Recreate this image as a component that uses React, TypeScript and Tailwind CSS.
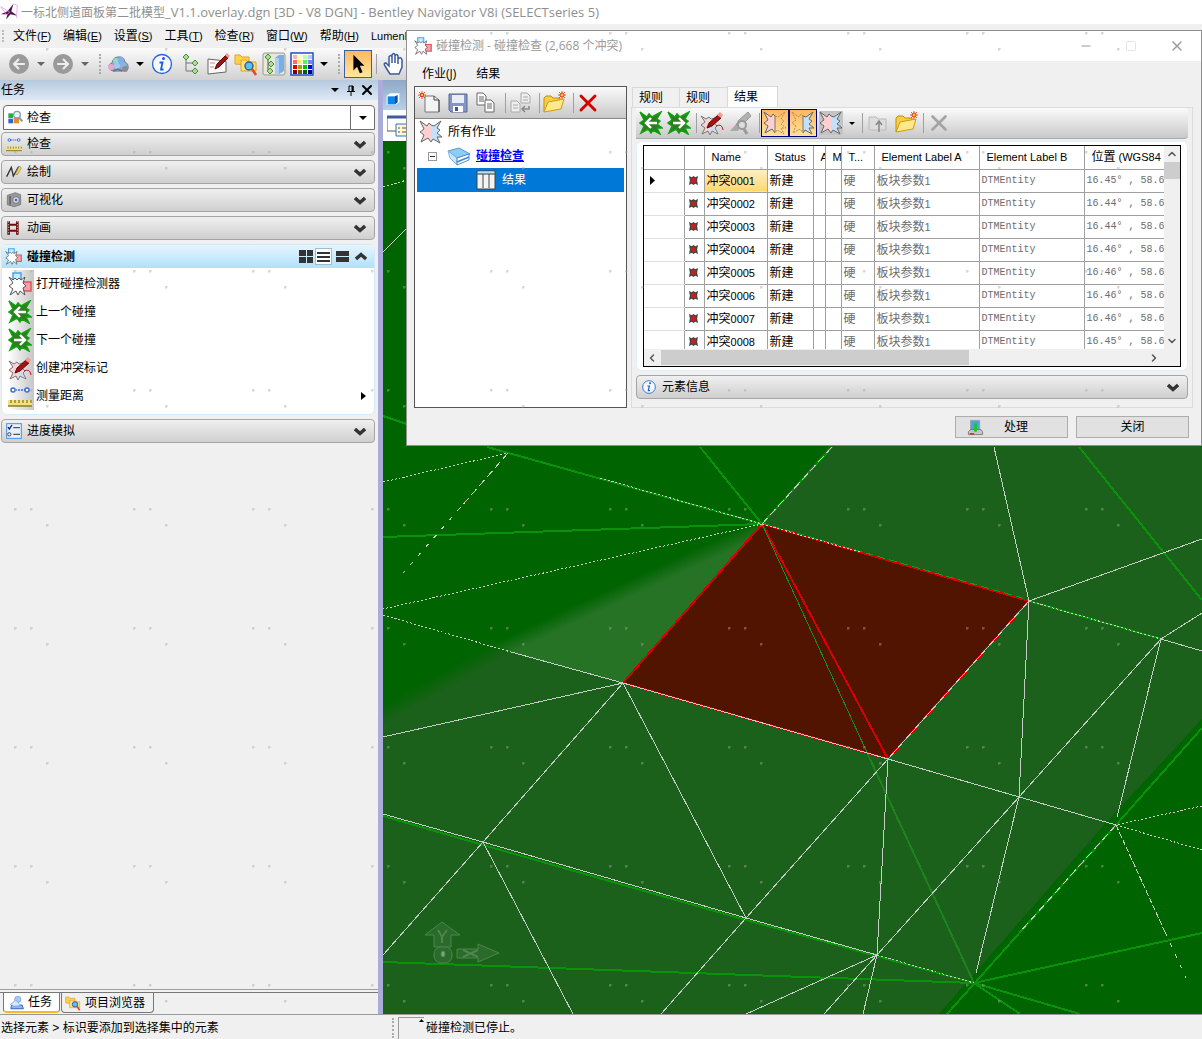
import type { ReactNode } from "react"
import { ChevronLeft, ChevronRight, ChevronDown, ChevronUp, Minus, Square, X } from "lucide-react"

const BURST = "M1 1L8 6L10 3L13 6L22 1L18 8L21 10L18 13L23 17L18 17L21 23L14 19L12 22L9 18L2 22L5 15L1 12L5 9Z"

const rows = ["16.45", "16.44", "16.44", "16.46", "16.46", "16.46", "16.46", "16.45"].map((lat, i) => ({
  id: `000${i + 1}`,
  position: `${lat}° , 58.6`,
}))

const menus = [
  ["文件", "F"],
  ["编辑", "E"],
  ["设置", "S"],
  ["工具", "T"],
  ["检查", "R"],
  ["窗口", "W"],
  ["帮助", "H"],
]

/* ---------- Icons ---------- */

function Svg({ size = 24, children }: { size?: number; children: ReactNode }) {
  return (
    <svg width={size} height={size} viewBox="0 0 24 24" fill="none" className="shrink-0" aria-hidden="true">
      {children}
    </svg>
  )
}

function Caret({ className = "text-black" }: { className?: string }) {
  return (
    <svg width="8" height="4" viewBox="0 0 8 4" className={`shrink-0 ${className}`} aria-hidden="true">
      <path d="M0 0H8L4 4Z" fill="currentColor" />
    </svg>
  )
}

function Chevron({ up = false }: { up?: boolean }) {
  return (
    <svg width="12" height="9" viewBox="0 0 12 9" className="shrink-0" aria-hidden="true">
      <path d={up ? "M1 7L6 2.500L11 7" : "M1 2L6 6.500L11 2"} fill="none" stroke="#333" strokeWidth="3.400" />
    </svg>
  )
}

function GreenBurst({ right = false }: { right?: boolean }) {
  return (
    <Svg>
      <path d={BURST} fill="#2f7d22" stroke="#12a012" strokeWidth="1.500" />
      <path
        d={right ? "M6 12H17M12 7L17 12L12 17" : "M18 12H7M12 7L7 12L12 17"}
        stroke="#fff"
        strokeWidth="2.400"
      />
    </Svg>
  )
}

function ClashIcon({ size = 24 }: { size?: number }) {
  return (
    <Svg size={size}>
      <path d="M5 9V1H13V9" fill="#c8eaff" stroke="#4ba3e8" strokeWidth="1.500" />
      <path d="M14 10H23V19H14Z" fill="#f5a0a8" stroke="#e0525c" strokeWidth="1.500" />
      <path
        d="M1 5L5 8L7 6L9 8L11 6L13 8L17 5L15 11L18 14L15 16L17 23L12 19L10 23L8 19L2 23L5 17L1 14L5 11Z"
        fill="#fff"
        stroke="#555"
      />
    </Svg>
  )
}

function MarkIcon({ gray = false }: { gray?: boolean }) {
  return (
    <Svg>
      {gray ? (
        <>
          <path d="M2 20L9 12L13 15L10 20Z" fill="#aaa" />
          <path d="M8 14L11 9L20 1L23 5L14 14Z" fill="#b0b0b0" stroke="#999" />
          <circle cx="14" cy="14" r="4" fill="#ddd" stroke="#999" strokeWidth="2" />
          <path d="M16 18L19 23" stroke="#999" strokeWidth="3" />
        </>
      ) : (
        <>
          <path
            d="M1 5L6 8L9 6L11 8L15 7L14 12L17 15L15 17L18 23L12 20L10 24L8 20L2 23L5 17L1 14L5 11Z"
            fill="#f8d3d6"
            stroke="#777"
          />
          <path d="M12 14L15 15L14 17L17 22L12 19L10 22Z" fill="#bfe0fb" />
          <path d="M16 15Q22 12 23 19" stroke="#c01818" />
          <path d="M7 17L9 12L18 4L21 7L12 15Z" fill="#a51212" stroke="#5a0a0a" />
          <path d="M17 4L20 1L23 4L21 7Z" fill="#f59a90" />
        </>
      )}
    </Svg>
  )
}

function BurstPair({ left = true, right = true }: { left?: boolean; right?: boolean }) {
  return (
    <Svg>
      <path d="M12 5L10 3L8 6L1 1L5 9L1 12L5 15L2 22L9 18L12 22Z" fill={left ? "#fad0d3" : "none"} />
      <path d="M12 5L15 6L22 1L18 8L21 10L18 13L23 17L18 17L21 23L14 19L12 22Z" fill={right ? "#c4e0fa" : "none"} />
      <path
        d="M12 5L10 3L8 6L1 1L5 9L1 12L5 15L2 22L9 18L12 22"
        stroke={left ? "#666" : "#b98d52"}
        strokeDasharray={left ? undefined : "2 1"}
      />
      <path
        d="M12 5L15 6L22 1L18 8L21 10L18 13L23 17L18 17L21 23L14 19L12 22"
        stroke={right ? "#666" : "#b98d52"}
        strokeDasharray={right ? undefined : "2 1"}
      />
      {left !== right && <path d="M12 5V21" stroke="#777" />}
    </Svg>
  )
}

function RulerIcon({ size = 24 }: { size?: number }) {
  return (
    <Svg size={size}>
      <path d="M7 6H17" stroke="#2f6fe0" strokeWidth="1.500" strokeDasharray="2 1" />
      <circle cx="5" cy="6" r="2" fill="#fff" stroke="#2f6fe0" strokeWidth="1.500" />
      <circle cx="19" cy="6" r="2" fill="#fff" stroke="#2f6fe0" strokeWidth="1.500" />
      <path d="M0 16H24V22H0Z" fill="#f2e27a" />
      <path d="M0 22H24" stroke="#8b7a30" strokeWidth="1.500" />
      <path d="M3 16V19M7 16V19M11 16V19M15 16V19M19 16V19M23 16V19" stroke="#6b5a18" />
    </Svg>
  )
}

function InfoIcon({ size = 24 }: { size?: number }) {
  return (
    <Svg size={size}>
      <circle cx="12" cy="12" r="9.500" fill="#f4f9ff" stroke="#2563d8" strokeWidth="1.300" />
      <circle cx="13.500" cy="6.500" r="1.500" fill="#1b5be0" />
      <path d="M9.500 10.500H12.500L11 17.500H13.500" stroke="#1b5be0" strokeWidth="1.800" />
    </Svg>
  )
}

function FolderNew() {
  return (
    <Svg>
      <path d="M2 21V7L4 5H9L11 7H18V10" fill="#f7cf45" stroke="#c98b0a" />
      <path d="M2 21L6 11L22 8L19 18Z" fill="#ffe98a" stroke="#d09a12" />
      <path d="M20 0V8M16 4H24M17 1L23 7M23 1L17 7" stroke="#e8321a" strokeWidth="0.800" />
      <circle cx="20" cy="4" r="2" fill="#ffd21f" stroke="#e8321a" />
    </Svg>
  )
}

function FolderSearch({ size = 24 }: { size?: number }) {
  return (
    <Svg size={size}>
      <path d="M1 12V3H6L8 5H15V13Z" fill="#ffd24a" stroke="#e0a02e" />
      <path d="M7 19V8H12L14 10H22V19Z" fill="#ffe27a" stroke="#e0a02e" />
      <circle cx="15" cy="14" r="4" fill="#5cc0f0" stroke="#2a60a8" strokeWidth="1.500" />
      <path d="M18 17L22 23" stroke="#e8461e" strokeWidth="2.500" />
    </Svg>
  )
}

function PageNew() {
  return (
    <Svg>
      <path d="M7 5H16L21 9V21H7Z" fill="#f4f4f4" stroke="#777" />
      <path d="M16 5V9H21V21" stroke="#444" />
      <path d="M4 0V8M0 4H8M1 1L7 7M7 1L1 7" stroke="#e8321a" strokeWidth="0.800" />
      <circle cx="4" cy="4" r="1.700" fill="#ffd21f" stroke="#e8321a" />
    </Svg>
  )
}

function SaveIcon() {
  return (
    <Svg>
      <path d="M3 3H21V21H5L3 19Z" fill="#8494c4" stroke="#5a6698" />
      <path d="M6 4H18V12H6Z" fill="#e9edf5" />
      <path d="M7 15H17V21H7Z" fill="#fff" />
      <path d="M9 16H12V20H9Z" fill="#4a5680" />
    </Svg>
  )
}

function CopyIcon({ gray = false }: { gray?: boolean }) {
  const stroke = gray ? "#aaa" : "#666"
  return (
    <Svg>
      {gray ? (
        <>
          <path d="M13 2H19L22 5V12H13Z" fill="#eee" stroke={stroke} />
          <path d="M15 6H20M15 9H20" stroke={stroke} />
          <path d="M3 10H9L12 13V21H3Z" fill="#eee" stroke={stroke} />
          <path d="M5 14H10M5 17H10" stroke={stroke} />
          <path d="M21 15V18H14M17 15L14 18L17 21" stroke="#888" strokeWidth="1.500" />
        </>
      ) : (
        <>
          <path d="M3 2H9L12 5V14H3Z" fill="#fff" stroke={stroke} />
          <path d="M5 6H10M5 8H10M5 10H10" stroke={stroke} />
          <path d="M11 9H17L20 12V21H11Z" fill="#fff" stroke={stroke} />
          <path d="M13 13H18M13 15H18M13 17H18" stroke={stroke} />
        </>
      )}
    </Svg>
  )
}

function PenNote() {
  return (
    <Svg>
      <path d="M2 7L20 9V20L2 22Z" fill="#fafafa" stroke="#666" />
      <path d="M4 11H9M4 15H8" stroke="#f08080" />
      <path d="M9 17L11 12L20 3L22 6L13 15Z" fill="#a51212" stroke="#5a0a0a" />
      <path d="M19 3L21 1L24 4L22 6Z" fill="#f59a90" />
    </Svg>
  )
}

function CloudIcon() {
  return (
    <Svg>
      <path d="M3 16Q2 12 6 11Q7 5 12 5Q18 4 19 10Q23 12 22 17Q16 20 12 19Q5 20 3 16Z" fill="#8fa8c4" stroke="#6c8098" />
      <circle cx="10" cy="9" r="3" fill="#8ed8d0" />
      <circle cx="15" cy="8" r="3" fill="#7fb0e8" />
      <circle cx="5" cy="15" r="3" fill="#e8a8cc" />
      <circle cx="11" cy="14" r="3" fill="#a4c8f0" />
      <circle cx="17" cy="13" r="3" fill="#8ab4e4" />
      <circle cx="19" cy="17" r="3" fill="#8a8a92" />
      <path d="M7 19L12 17L16 19" stroke="#66728a" strokeWidth="1.500" />
    </Svg>
  )
}

function TreeIcon() {
  return (
    <Svg>
      <path d="M8 5V19H16M8 11H16" stroke="#777" />
      <path
        d="M8 2L11 5L8 8L5 5ZM17 8L20 11L17 14L14 11ZM17 16L20 19L17 22L14 19Z"
        fill="#a8e090"
        stroke="#4a8a40"
      />
    </Svg>
  )
}

function ModelsIcon() {
  return (
    <Svg>
      <rect x="1" y="1" width="22" height="22" rx="2" fill="#e8e7d8" stroke="#9a9a90" />
      <path d="M13 6L17 3H22V19L17 22H13Z" fill="#79aee8" />
      <path d="M13 6H17V22H13Z" fill="#a9cff6" />
      <path d="M6 5V18H9" stroke="#555" />
      <path d="M6 2L9 5L6 8L3 5ZM9 9L12 12L9 15L6 12ZM8 16L11 19L8 22L5 19Z" fill="#a8e090" stroke="#4a8a40" />
    </Svg>
  )
}

const swatches = [
  ["#ffb3b3", "#ffffb3", "#b3ffb3", "#c3c3ff"],
  ["#ff6b6b", "#fff06b", "#55f255", "#7f7fff"],
  ["#e00000", "#a8a000", "#00c000", "#0000e0"],
  ["#800000", "#606000", "#006000", "#000080"],
]

function PaletteIcon() {
  return (
    <Svg>
      <rect x="1" y="1" width="22" height="22" fill="#fff" stroke="#1b50c8" strokeWidth="1.500" />
      {swatches.map((line, r) =>
        line.map((c, i) => <rect key={c} x={3 + i * 5} y={3 + r * 5} width="4" height="4" fill={c} />)
      )}
    </Svg>
  )
}

function RoundArrow({ right = false }: { right?: boolean }) {
  return (
    <Svg size={20}>
      <circle cx="12" cy="12" r="12" fill="#9a9a9a" />
      <path
        d={right ? "M5 12H18M12 6L18 12L12 18" : "M19 12H6M12 6L6 12L12 18"}
        stroke="#eee"
        strokeWidth="2.500"
      />
    </Svg>
  )
}

function TasksIcon() {
  return (
    <Svg size={15}>
      <path d="M3 22L4 16H21L23 22Z" fill="#8db6f2" stroke="#2c5fc0" strokeWidth="1.500" />
      <circle cx="14" cy="7" r="5" fill="#a8cdf5" stroke="#5f92d8" />
      <path d="M2 15L11 8L19 17L8 18Z" fill="#d8e8fb" stroke="#5f92d8" />
    </Svg>
  )
}

/* ---------- Shared pieces ---------- */

function IconButton({ label, children, className = "" }: { label: string; children: ReactNode; className?: string }) {
  return (
    <button type="button" aria-label={label} className={`flex h-7 w-7 shrink-0 items-center justify-center ${className}`}>
      {children}
    </button>
  )
}

function Divider() {
  return <span className="h-5 w-px shrink-0 bg-[#a0a0a0]" />
}

function Grip() {
  return <span className="h-5 w-0 shrink-0 border-l-2 border-dotted border-[#aaaaaa]" />
}

function GroupBar({ icon, label }: { icon: ReactNode; label: string }) {
  return (
    <button
      type="button"
      className="flex h-6 w-full items-center rounded border border-[#a5a5a5] bg-linear-to-b from-[#f0f0f0] to-[#cfcfcf] pr-2 pl-1 text-left"
    >
      <span className="flex w-[21px] shrink-0">{icon}</span>
      <span className="flex-1">{label}</span>
      <Chevron />
    </button>
  )
}

/* ---------- Task panel ---------- */

const clashTools = [
  { label: "打开碰撞检测器", icon: <ClashIcon /> },
  { label: "上一个碰撞", icon: <GreenBurst /> },
  { label: "下一个碰撞", icon: <GreenBurst right /> },
  { label: "创建冲突标记", icon: <MarkIcon /> },
  { label: "测量距离", icon: <RulerIcon />, more: true },
]

function TaskPanel() {
  return (
    <aside className="flex w-[378px] shrink-0 flex-col bg-[#f0f0f0]">
      <header className="flex h-5 items-center bg-linear-to-b from-[#b7c9de] to-[#dce8f6] pr-[3px] pl-px">
        <h2 className="flex-1">任务</h2>
        <button type="button" aria-label="菜单" className="px-1">
          <Caret />
        </button>
        <button type="button" aria-label="固定" className="px-1">
          <svg width="8" height="11" viewBox="0 0 8 11" fill="none" stroke="#000" aria-hidden="true">
            <path d="M2 6V1H6V6M0 6.500H8M4 7V11" />
            <path d="M5.500 1V6" strokeWidth="2" />
          </svg>
        </button>
        <button type="button" aria-label="关闭任务">
          <X size={16} strokeWidth={3} />
        </button>
      </header>

      <div className="mx-[3px] mt-[5px] mb-0.5 flex h-[25px] rounded-t border border-[#6e6e6e] bg-white">
        <button type="button" className="flex flex-1 items-center gap-1 pl-[3px] text-left">
          <Svg size={16}>
            <path d="M2 5H9V12H2Z" fill="#2aa84a" />
            <path d="M2 13H9V20H2Z" fill="#2a6ad8" />
            <path d="M10 12H18V20H10Z" fill="#f08a1c" />
            <circle cx="15" cy="7" r="5" fill="#e6f4fb" stroke="#8a9aa5" strokeWidth="2" />
            <path d="M18 11L23 17" stroke="#8a9aa5" strokeWidth="3" />
          </Svg>
          检查
        </button>
        <button type="button" aria-label="选择任务" className="flex w-6 items-center justify-center border-l border-[#6e6e6e]">
          <Caret />
        </button>
      </div>

      <div className="flex flex-1 flex-col gap-1 px-px pr-[3px]">
        <GroupBar label="检查" icon={<RulerIcon size={16} />} />
        <GroupBar
          label="绘制"
          icon={
            <Svg size={16}>
              <path d="M1 19L8 5L11 18L19 4" stroke="#333" strokeWidth="2" />
              <path d="M14 15L20 3L23 6L17 16Z" fill="#ffd93b" stroke="#777" />
            </Svg>
          }
        />
        <GroupBar
          label="可视化"
          icon={
            <Svg size={16}>
              <path d="M2 5L14 1L22 4V19L12 22L2 19Z" fill="#9a9a9a" stroke="#666" />
              <path d="M6 6V19" stroke="#555" strokeWidth="2" />
              <circle cx="15" cy="12" r="5" fill="#d8dcea" stroke="#555" />
              <circle cx="15" cy="12" r="2" fill="#3c5cc0" />
            </Svg>
          }
        />
        <GroupBar
          label="动画"
          icon={
            <Svg size={16}>
              <path d="M4 2V22M17 2V22" stroke="#6e0c0c" strokeWidth="4" />
              <path d="M4 7H17M4 16H17" stroke="#6e0c0c" strokeWidth="3" />
              <path d="M4 2V22M17 2V22" stroke="#fff" strokeDasharray="2 2" />
            </Svg>
          }
        />

        <section className="rounded-md border border-[#d3ebf9] bg-white pb-1">
          <div className="flex h-[23px] items-center rounded-t bg-linear-to-b from-[#e6f5fe] to-[#b0e0fa] pr-[7px] pl-[3px]">
            <span className="flex w-[22px] shrink-0">
              <ClashIcon size={17} />
            </span>
            <h3 className="flex-1 font-bold">碰撞检测</h3>
            <button type="button" aria-label="图标视图" className="grid w-[18px] grid-cols-2 gap-px px-0.5">
              <span className="h-[6px] bg-[#333]" />
              <span className="h-[6px] bg-[#333]" />
              <span className="h-[6px] bg-[#333]" />
              <span className="h-[6px] bg-[#333]" />
            </button>
            <button
              type="button"
              aria-label="列表视图"
              className="flex h-[17px] w-[17px] flex-col justify-center gap-0.5 border border-[#9dbccc] bg-white px-px"
            >
              <span className="h-0.5 bg-[#333]" />
              <span className="h-0.5 bg-[#333]" />
              <span className="h-0.5 bg-[#333]" />
            </button>
            <button type="button" aria-label="面板视图" className="flex w-[17px] flex-col gap-px pl-1">
              <span className="h-[5px] bg-[#333]" />
              <span className="h-[5px] bg-[#333]" />
            </button>
            <button type="button" aria-label="折叠" className="pl-[6px]">
              <Chevron up />
            </button>
          </div>
          <ul className="mt-0.5">
            {clashTools.map((tool) => (
              <li key={tool.label}>
                <button type="button" className="flex h-7 w-full items-center pr-2 pl-[6px] text-left">
                  <span className="flex h-full w-[26px] shrink-0 items-center bg-linear-to-r from-white to-[#c6c6c6]">
                    {tool.icon}
                  </span>
                  <span className="flex-1 pl-0.5">{tool.label}</span>
                  {tool.more && (
                    <svg width="5" height="8" viewBox="0 0 5 8" aria-hidden="true">
                      <path d="M0 0L5 4L0 8Z" />
                    </svg>
                  )}
                </button>
              </li>
            ))}
          </ul>
        </section>

        <GroupBar
          label="进度模拟"
          icon={
            <Svg size={16}>
              <rect x="1" y="1" width="22" height="22" fill="#e6f0ff" stroke="#4b8fe8" strokeWidth="1.500" />
              <path d="M3 6L5 9L9 3" stroke="#12128a" strokeWidth="2" />
              <circle cx="5" cy="17" r="2.500" stroke="#444" strokeWidth="1.500" />
              <path d="M11 7H21M11 17H21" stroke="#555" strokeWidth="2" />
            </Svg>
          }
        />
      </div>

      <div className="flex h-[25px] border-t border-[#a0a0a0]">
        <div className="mt-0.5 flex w-full items-start border-t border-[#777] pl-[3px]">
          <button
            type="button"
            className="flex h-5 w-[57px] items-center gap-1 rounded-b border-r border-b-2 border-l border-[#777] border-b-[#f5b82e] bg-white pl-[5px]"
          >
            <TasksIcon />
            任务
          </button>
          <button
            type="button"
            className="ml-px flex h-5 items-center gap-1 rounded-b border border-t-0 border-[#777] pr-2 pl-[3px]"
          >
            <FolderSearch size={16} />
            项目浏览器
          </button>
        </div>
      </div>
    </aside>
  )
}

/* ---------- Terrain view ---------- */

function Terrain() {
  return (
    <svg
      viewBox="383 141 819 873"
      preserveAspectRatio="xMinYMin slice"
      className="min-h-0 w-full flex-1"
      role="img"
      aria-label="三维视图"
    >
      <defs>
        <linearGradient id="shade" gradientUnits="userSpaceOnUse" x1="562" y1="611" x2="569" y2="626">
          <stop offset="0" stopColor="#006400" />
          <stop offset="1" stopColor="#267326" />
        </linearGradient>
        <linearGradient id="shadeLow" gradientUnits="userSpaceOnUse" x1="437" y1="674" x2="446" y2="690">
          <stop offset="0" stopColor="#006400" />
          <stop offset="1" stopColor="#1b611b" />
        </linearGradient>
      </defs>
      <rect x="383" y="141" width="819" height="873" fill="#006400" />
      <path d="M762 524L894 370H1202V719L1104 825L939 1014H383V700L500 648L623 683Z" fill="#1b611b" />
      <path d="M383 609V737L623 683L383 615Z" fill="url(#shadeLow)" />
      <path d="M762 524L383 609V615L511 652L623 683Z" fill="url(#shade)" />
      <path d="M762 524L1029 601L888 759L623 683Z" fill="#501400" />

      <g shapeRendering="crispEdges" fill="none">
        <g stroke="#0a930a" strokeWidth="2">
          <path d="M383 537L762 524L487 447M700 447L762 524L832 447M383 962L974 983L1202 933" />
          <path d="M383 416L407 424M1202 728L1116 825L947 1014M974 983L1020 1014M974 983L1080 1014" />
          <path d="M383 816L483 845L746 920L974 983M1079 447L1202 600" />
        </g>
        <path d="M1029 601L1161 639" stroke="#0a930a" strokeWidth="2" />
        <path d="M870 759L974 983" stroke="#1d841d" strokeWidth="2" />
        <path d="M762 524L1029 601L888 759L623 683ZM762 524L888 759" stroke="#d80000" strokeWidth="2" />
        <path d="M762 524L870 759" stroke="#149014" />
        <path d="M762 523L1029 600" stroke="#149a14" strokeDasharray="8 4" />
        <g stroke="#c4cec4">
          <path d="M511 652L623 683L383 737M623 683L483 842L383 955M623 683L746 918L661 1014M483 842L573 1014" />
          <path d="M383 814L483 842L746 918L877 955L863 1014M746 1014L877 955L824 1014M746 918L888 759L877 955L1019 797" />
          <path d="M623 683L888 759L1116 825M888 759L1029 601L1019 797L1161 639L1117 817M994 447L1029 601L1202 539" />
          <path d="M1202 613L1161 639L1202 651M1019 797L976 973M383 252L407 228" />
        </g>
        <g stroke="#c4cec4" strokeDasharray="2 2">
          <path d="M383 482L508 453M600 478L762 524L383 609M383 615L511 652M762 524L860 552M877 955L974 983" />
          <path d="M1029 601L1161 639M1202 806L1116 825L1202 850M383 187L407 180" />
        </g>
        <g stroke="#c4cec4" strokeDasharray="8 4">
          <path d="M508 453L460 508M762 524L832 447M1116 825L1020 932" />
        </g>
        <path d="M460 508L403 573M1165 932L1186 978" stroke="#c4cec4" strokeDasharray="4 8" />
        <path d="M1116 825L1165 932" stroke="#c4cec4" strokeDasharray="6 2" />
      </g>

      {/* axis triad */}
      <g fill="#2a6a2a" stroke="#4d854d">
        <path d="M442 922L460 935H451V947H434V935H425Z" />
        <path d="M457 949H478V944L499 953L478 962V958H457Z" />
        <rect x="434" y="947" width="18" height="16" rx="7" />
        <path d="M438 930L442 937L447 930M442 937V943M463 950L478 957M478 950L463 957" strokeWidth="2" />
        <ellipse cx="443" cy="954" rx="2" ry="3" fill="#7ba87b" />
      </g>
    </svg>
  )
}

/* ---------- Clash detection dialog ---------- */

function JobTree() {
  return (
    <div className="flex w-[213px] shrink-0 flex-col border border-[#555] bg-white">
      <div className="flex h-8 shrink-0 items-center border-b border-[#888] bg-linear-to-b from-[#fafafa] to-[#c9c9c9] pl-px">
        <IconButton label="新建">
          <PageNew />
        </IconButton>
        <IconButton label="保存">
          <SaveIcon />
        </IconButton>
        <IconButton label="复制">
          <CopyIcon />
        </IconButton>
        <span className="w-[5px]" />
        <Divider />
        <IconButton label="粘贴">
          <CopyIcon gray />
        </IconButton>
        <span className="w-[5px]" />
        <Divider />
        <IconButton label="打开">
          <FolderNew />
        </IconButton>
        <span className="w-[5px]" />
        <Divider />
        <IconButton label="删除">
          <X size={28} color="#d40000" strokeWidth={2.5} />
        </IconButton>
      </div>
      <ul className="px-0.5 pt-px">
        <li className="flex h-6 items-center gap-[5px] pl-0.5">
          <BurstPair />
          所有作业
        </li>
        <li className="flex h-6 items-center pl-[11px]">
          <button type="button" aria-label="折叠碰撞检查" className="flex h-[9px] w-[9px] items-center border border-[#999] px-px">
            <span className="h-px w-full bg-[#334]" />
          </button>
          <span className="mr-[5px] ml-[10px] flex">
            <Svg>
              <path d="M1 7L12 4L23 10L10 14Z" fill="#8ccdf5" stroke="#5b9ac8" />
              <path d="M1 7L10 14V21L3 14Z" fill="#c9e6fa" stroke="#7fb2dc" />
              <path d="M10 14L22 10V16L10 21Z" fill="#fff" stroke="#4f8fd0" />
              <path d="M10 18L22 13" stroke="#3f86d8" strokeWidth="1.500" />
            </Svg>
          </span>
          <a href="#clash" className="font-bold text-[#0000ff] underline">
            碰撞检查
          </a>
        </li>
        <li className="flex h-6 items-center gap-[6px] bg-[#0078d7] pl-[59px] text-white">
          <svg width="20" height="20" viewBox="0 0 20 20" aria-hidden="true">
            <rect x="1" y="1" width="18" height="18" fill="#f4f4f4" stroke="#444" />
            <path d="M2 3H18" stroke="#b8dcf0" strokeWidth="3" />
            <path d="M7 4V18M13 4V18M1 4H19" stroke="#444" />
          </svg>
          结果
        </li>
      </ul>
    </div>
  )
}

function ResultsTable() {
  return (
    <div className="border border-black bg-white">
      <div className="flex h-[203px]">
        <div className="min-w-0 flex-1 overflow-hidden">
          <table className="w-[560px] table-fixed border-collapse text-left">
            <colgroup>
              <col className="w-10" />
              <col className="w-5" />
              <col className="w-[63px]" />
              <col className="w-[46px]" />
              <col className="w-3" />
              <col className="w-4" />
              <col className="w-[33px]" />
              <col className="w-[105px]" />
              <col className="w-[105px]" />
              <col className="w-[120px]" />
            </colgroup>
            <thead>
              <tr className="h-[23px] text-[11px] leading-4 whitespace-nowrap">
                <th className="border-r border-b border-[#a0a0a0]" />
                <th className="border-r border-b border-[#a0a0a0]" />
                <th className="border-r border-b border-[#a0a0a0] pl-[7px] font-normal">Name</th>
                <th className="border-r border-b border-[#a0a0a0] pl-[7px] font-normal">Status</th>
                <th className="overflow-hidden border-r border-b border-[#a0a0a0] pl-[7px] font-normal">A</th>
                <th className="overflow-hidden border-r border-b border-[#a0a0a0] pl-[7px] font-normal">M</th>
                <th className="overflow-hidden border-r border-b border-[#a0a0a0] pl-[7px] font-normal">T...</th>
                <th className="border-r border-b border-[#a0a0a0] pl-[7px] font-normal">Element Label A</th>
                <th className="border-r border-b border-[#a0a0a0] pl-[7px] font-normal">Element Label B</th>
                <th className="border-b border-[#a0a0a0] pl-[7px] font-normal">
                  <span className="text-xs">位置</span> (WGS84 经纬度)
                </th>
              </tr>
            </thead>
            <tbody>
              {rows.map((row, i) => (
                <tr key={row.id} className="h-[23px] leading-4 whitespace-nowrap">
                  <td className="border-r border-b border-[#a0a0a0] border-b-[#e0e0e0] pl-[6px]">
                    {i === 0 && (
                      <svg width="5" height="9" viewBox="0 0 5 9" aria-label="当前行">
                        <path d="M0 0L5 4.500L0 9Z" />
                      </svg>
                    )}
                  </td>
                  <td className="border-r border-b border-[#a0a0a0] pl-1">
                    <svg width="9" height="9" viewBox="0 0 10 10" aria-hidden="true">
                      <path d="M0 0L3 1.500L5 0L7 1.500L10 0L9 5L10 10L7 8.500L5 10L3 8.500L0 10L1 5Z" fill="#444" />
                      <circle cx="5" cy="5" r="3" fill="#c52020" />
                    </svg>
                  </td>
                  <td
                    className={
                      i === 0
                        ? "border-r border-b border-[#a0a0a0] bg-linear-to-b from-[#fdf0c0] via-[#ffe39a] to-[#ffd76a] pl-0.5"
                        : "border-r border-b border-[#a0a0a0] pl-0.5"
                    }
                  >
                    冲突<span className="text-[11px]">{row.id}</span>
                  </td>
                  <td className="border-r border-b border-[#a0a0a0] pl-0.5">新建</td>
                  <td className="border-r border-b border-[#a0a0a0]" />
                  <td className="border-r border-b border-[#a0a0a0]" />
                  <td className="border-r border-b border-[#a0a0a0] pl-0.5 text-[#6d6d6d]">硬</td>
                  <td className="border-r border-b border-[#a0a0a0] pl-0.5 text-[#6d6d6d]">
                    板块参数<span className="text-[11px]">1</span>
                  </td>
                  <td className="border-r border-b border-[#a0a0a0] pl-0.5 font-[Liberation_Mono,monospace] text-[10px] text-[#6d6d6d]">
                    DTMEntity
                  </td>
                  <td className="border-b border-[#a0a0a0] pl-0.5 font-[Liberation_Mono,monospace] text-[10px] text-[#6d6d6d]">
                    {row.position}
                  </td>
                </tr>
              ))}
            </tbody>
          </table>
        </div>
        <div className="flex w-4 shrink-0 flex-col items-center bg-[#f0f0f0]">
          <ChevronUp size={12} className="my-0.5" color="#555" strokeWidth={3} />
          <span className="h-[17px] w-full bg-[#cdcdcd]" />
          <ChevronDown size={12} className="mt-auto mb-0.5" color="#555" strokeWidth={3} />
        </div>
      </div>
      <div className="flex h-[17px] items-center bg-[#f0f0f0] pr-5 pl-0.5">
        <ChevronLeft size={12} color="#555" strokeWidth={3} />
        <span className="ml-[3px] h-[15px] w-3/5 bg-[#cdcdcd]" />
        <ChevronRight size={12} className="ml-auto" color="#555" strokeWidth={3} />
      </div>
    </div>
  )
}

function ResultsPane() {
  return (
    <div className="flex min-w-0 flex-1 flex-col">
      <div className="flex items-end pl-px">
        <button type="button" className="h-5 w-12 border border-b-0 border-[#d9d9d9] pl-1.5 text-left">
          规则
        </button>
        <button type="button" className="h-5 w-[47px] border-t border-[#d9d9d9] pl-1.5 text-left">
          规则
        </button>
        <button type="button" className="h-[21px] w-[51px] border-x border-t border-[#d9d9d9] bg-white pl-1.5 text-left">
          结果
        </button>
      </div>
      <div className="border border-[#dcdcdc] bg-[#f0f0f0] px-1 pb-2">
        <div className="flex h-[31px] items-center rounded-r border-b border-[#aaa] bg-linear-to-b from-[#fbfbfb] to-[#c9c9c9] pl-px">
          <IconButton label="上一个">
            <GreenBurst />
          </IconButton>
          <IconButton label="下一个">
            <GreenBurst right />
          </IconButton>
          <span className="w-[3px]" />
          <Divider />
          <IconButton label="标记" className="ml-px">
            <MarkIcon />
          </IconButton>
          <IconButton label="缩放标记">
            <MarkIcon gray />
          </IconButton>
          <span className="w-[5px]" />
          <Divider />
          <IconButton label="显示 A" className="ml-px border border-[#00007a] bg-linear-to-b from-[#ffb760] to-[#ffe39a]">
            <BurstPair right={false} />
          </IconButton>
          <IconButton label="显示 B" className="border border-[#00007a] bg-linear-to-b from-[#ffb760] to-[#ffe39a]">
            <BurstPair left={false} />
          </IconButton>
          <IconButton label="显示两者">
            <span className="bg-[#c4c4c4]">
              <BurstPair />
            </span>
          </IconButton>
          <button type="button" aria-label="显示选项" className="px-1">
            <svg width="6" height="3" viewBox="0 0 6 3" aria-hidden="true">
              <path d="M0 0H6L3 3Z" />
            </svg>
          </button>
          <span className="w-[3px]" />
          <Divider />
          <IconButton label="上移" className="ml-px">
            <Svg>
              <path d="M3 19V6H10L12 8H20V19Z" fill="#ddd" stroke="#bbb" />
              <path d="M13 21V11M10 14L13 10L16 14" stroke="#888" strokeWidth="1.500" />
            </Svg>
          </IconButton>
          <IconButton label="新建文件夹">
            <FolderNew />
          </IconButton>
          <span className="w-[3px]" />
          <Divider />
          <IconButton label="移除" className="ml-px">
            <X size={26} color="#a4a4a4" strokeWidth={2.5} />
          </IconButton>
        </div>
        <div className="mt-0.5 rounded-md border border-[#e0f0fa] bg-white px-[6px] py-[3px]">
          <ResultsTable />
        </div>
        <div className="mt-1">
          <GroupBar label="元素信息" icon={<InfoIcon size={16} />} />
        </div>
      </div>
    </div>
  )
}

function ClashDialog() {
  return (
    <section
      role="dialog"
      aria-label="碰撞检测"
      className="absolute top-[30px] right-0 left-[406px] border border-[#8f8f8f] bg-[#f0f0f0]"
    >
      <header className="flex h-[30px] items-center bg-white pr-4 pl-[7px] text-[#999]">
        <ClashIcon size={18} />
        <h2 className="ml-1 flex-1 font-[Open_Sans,Noto_Sans_CJK_SC,sans-serif]">碰撞检测 - 碰撞检查 (2,668 个冲突)</h2>
        <div className="flex items-center gap-8">
          <button type="button" aria-label="最小化">
            <Minus size={14} strokeWidth={2} />
          </button>
          <button type="button" aria-label="最大化" className="text-[#e4e4e4]">
            <Square size={12} />
          </button>
          <button type="button" aria-label="关闭窗口">
            <X size={16} strokeWidth={2} />
          </button>
        </div>
      </header>
      <nav className="flex h-[25px] items-center gap-5 pl-[15px] font-[Open_Sans,Noto_Sans_CJK_SC,sans-serif]">
        <button type="button">
          作业(<u>J</u>)
        </button>
        <button type="button">结果</button>
      </nav>
      <div className="flex gap-1 pr-2 pl-[7px]">
        <JobTree />
        <ResultsPane />
      </div>
      <footer className="flex justify-end gap-2 px-3 pt-2 pb-[7px]">
        <button
          type="button"
          className="flex h-[22px] w-[113px] items-center justify-center border border-[#adadad] bg-[#e1e1e1] pr-7"
        >
          <Svg size={17}>
            <path d="M5 2H18V17H5Z" fill="#4ca3ec" stroke="#999" />
            <path d="M2 18L5 15H20L22 18V22H2Z" fill="#c4c4c4" stroke="#666" />
            <path d="M12 6V18" stroke="#1ec81e" strokeWidth="4" />
            <path d="M4 21H10" stroke="#c22" strokeWidth="2" />
          </Svg>
          <span className="ml-5">处理</span>
        </button>
        <button type="button" className="h-[22px] w-[113px] border border-[#adadad] bg-[#e1e1e1]">
          关闭
        </button>
      </footer>
    </section>
  )
}

/* ---------- Snap grid ---------- */

function SnapGrid() {
  return (
    <svg className="pointer-events-none absolute inset-0 h-full w-full" aria-hidden="true">
      <defs>
        <pattern id="snap" width="119" height="119" patternUnits="userSpaceOnUse">
          <path
            d="M14 33H17M30 33H33M15 32V35M31 32V35M46 49H49M47 48V51"
            stroke="#a8a8a8"
            strokeOpacity="0.5"
          />
        </pattern>
      </defs>
      <rect width="100%" height="100%" fill="url(#snap)" />
    </svg>
  )
}

export default function App() {
  return (
    <div className="relative flex min-h-screen flex-col overflow-hidden bg-[#f0f0f0] font-[Liberation_Sans,Noto_Sans_CJK_SC,sans-serif] text-xs leading-4 text-black">
      {/* Title */}
      <header className="flex h-6 items-center bg-white font-[Open_Sans,Noto_Sans_CJK_SC,sans-serif] text-[#8f8f8f]">
        <Svg size={18}>
          <path d="M1 15L10 11L18 1L15 11L23 17L14 15L8 22L10 15Z" fill="#52104f" />
          <path d="M1 5L13 12L9 16ZM18 1L23 3L22 20" stroke="#e39bde" />
        </Svg>
        <h1 className="ml-[3px] whitespace-nowrap">
          一标北侧道面板第二批模型
          <span className="text-[13px]">_V1.1.overlay.dgn [3D - V8 DGN] - Bentley Navigator V8i (SELECTseries 5)</span>
        </h1>
      </header>

      {/* Menu */}
      <nav className="flex h-6 items-center gap-3 pl-0.5">
        <span className="-mr-[3px] h-3 border-l-2 border-dotted border-[#bbb]" />
        {menus.map(([label, key]) => (
          <button type="button" key={label} className="whitespace-nowrap">
            {label}
            <span className="text-[11px]">
              (<u>{key}</u>)
            </span>
          </button>
        ))}
        <button type="button" className="text-[11px]">
          LumenRT
        </button>
      </nav>

      {/* Toolbar */}
      <div className="flex h-8 items-center bg-linear-to-b from-[#fbfbfb] to-[#d2d2d2]">
        <span className="w-[5px]" />
        <IconButton label="后退">
          <RoundArrow />
        </IconButton>
        <span className="px-1">
          <Caret className="text-[#666]" />
        </span>
        <IconButton label="前进">
          <RoundArrow right />
        </IconButton>
        <span className="px-1">
          <Caret className="text-[#666]" />
        </span>
        <span className="w-1.5" />
        <Grip />
        <IconButton label="模型" className="ml-[3px]">
          <CloudIcon />
        </IconButton>
        <span className="px-1">
          <Caret />
        </span>
        <IconButton label="信息">
          <InfoIcon />
        </IconButton>
        <IconButton label="层次">
          <TreeIcon />
        </IconButton>
        <IconButton label="批注">
          <PenNote />
        </IconButton>
        <IconButton label="浏览">
          <FolderSearch />
        </IconButton>
        <IconButton label="参考">
          <ModelsIcon />
        </IconButton>
        <IconButton label="颜色">
          <PaletteIcon />
        </IconButton>
        <span className="px-1">
          <Caret />
        </span>
        <span className="w-1.5" />
        <Grip />
        <IconButton
          label="选择元素"
          className="ml-1 border border-[#3d5ea8] bg-linear-to-b from-[#ffb760] to-[#ffe89a]"
        >
          <Svg size={22}>
            <path d="M7 2V19L11 15L14 22L17 21L14 14H19Z" fill="#000" />
          </Svg>
        </IconButton>
        <span className="w-1" />
        <Divider />
        <IconButton label="平移" className="ml-[3px]">
          <Svg>
            <path
              d="M8 22L3 14Q1 11 4 11L7 14V5Q9 2 10 5V11V3Q12 0 13 3V11V4Q15 1 16 4V12V7Q19 4 20 8V15L17 22Z"
              fill="#fff"
              stroke="#3c5c9c"
              strokeWidth="1.500"
            />
          </Svg>
        </IconButton>
      </div>

      {/* Workspace */}
      <main className="flex flex-1">
        <TaskPanel />
        <div className="w-[5px] shrink-0 bg-[#abacd9]" />
        <div className="flex min-w-0 flex-1 flex-col">
          <div className="flex h-[30px] shrink-0 items-end bg-linear-to-b from-[#8fa9c8] to-[#b8cfe8] pb-[3px] pl-0.5">
            <Svg size={16}>
              <path d="M2 7L8 3H22V17L16 21H2Z" fill="#fff" stroke="#9cc8ec" />
              <path d="M4 8H15V20H4Z" fill="#0f83e6" />
              <path d="M15 8L19 6V17L15 20Z" fill="#0752a8" />
            </Svg>
          </div>
          <div className="flex h-[31px] shrink-0 items-center bg-white pl-1">
            <Svg>
              <path d="M0 3H21V17H0Z" fill="#fff" stroke="#555" />
              <path d="M0 3H21" stroke="#3c5c9c" strokeWidth="3" />
              <path d="M9 10H24V22H9Z" fill="#fff8c8" stroke="#2f6fe0" />
              <path d="M11 14H13M15 14H23M11 18H13M15 18H23" stroke="#555" />
            </Svg>
          </div>
          <Terrain />
        </div>
      </main>

      {/* Status bar */}
      <footer className="flex h-[25px] shrink-0 items-center border-t border-[#999] pt-0.5 pl-px">
        <p className="w-[391px] shrink-0">选择元素 &gt; 标识要添加到选择集中的元素</p>
        <Grip />
        <span className="ml-1 flex h-full w-[26px] items-start justify-end border-t border-l border-[#999] pt-px">
          <svg width="5" height="3" viewBox="0 0 5 3" aria-hidden="true">
            <path d="M0 3H5L2.500 0Z" />
          </svg>
        </span>
        <p className="ml-0.5">碰撞检测已停止。</p>
      </footer>

      <ClashDialog />
      <SnapGrid />
    </div>
  )
}
